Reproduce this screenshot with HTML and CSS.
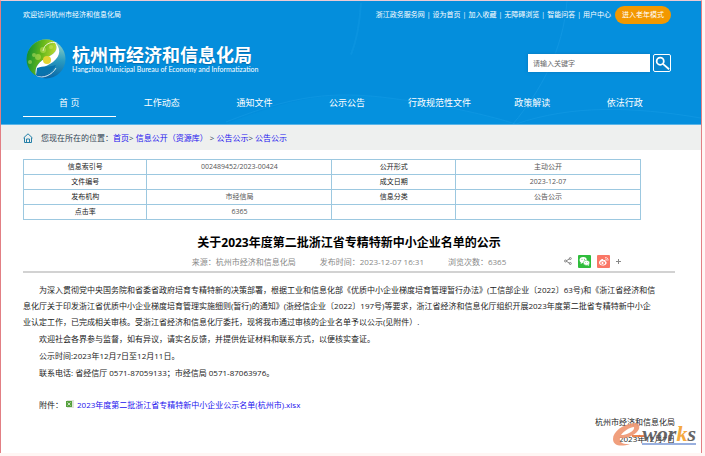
FILE: index.html
```html
<!DOCTYPE html>
<html lang="zh-CN">
<head>
<meta charset="utf-8">
<meta name="viewport" content="width=device-width, initial-scale=1">
<title>杭州市经济和信息化局</title>
<link rel="stylesheet" href="styles.css">
</head>
<body>
<div class="page">
  <header class="header">
    <svg class="waves" viewBox="0 0 700 124" preserveAspectRatio="none" aria-hidden="true">
      <path d="M225 124C290 98 330 90 390 98C450 106 490 116 515 124Z" fill="#0b97e3" opacity=".3"/>
      <path d="M566 0C562 50 540 90 512 124H700V0Z" fill="#0a96e2" opacity=".2"/>
      <path d="M566 0C562 50 540 90 512 124" fill="none" stroke="#2aa8ee" opacity=".3"/>
      <path d="M360 2Q358 34 350 54" fill="none" stroke="#1aa0e8" stroke-width="2" opacity=".3"/>
      <path d="M225 122C290 96 330 90 390 98S490 116 515 124C570 105 630 106 700 118" fill="none" stroke="#2aa8ee" opacity=".25"/>
    </svg>
    <div class="topbar">
      <span>欢迎访问杭州市经济和信息化局</span>
      <div class="tools">
        <a href="#">浙江政务服务网</a><i>|</i><a href="#">设为首页</a><i>|</i><a href="#">加入收藏</a><i>|</i><a href="#">无障碍浏览</a><i>|</i><a href="#">智能问答</a><i>|</i><a href="#">用户中心</a>
        <button class="elder" type="button">进入老年模式</button>
      </div>
    </div>
    <div class="brand">
      <a class="logo" href="#">
        <svg class="globe" viewBox="0 0 40 40" aria-hidden="true">
          <defs>
            <linearGradient id="green" x1="0" y1=".3" x2="1" y2=".5"><stop offset="0" stop-color="#078b36"/><stop offset=".5" stop-color="#65b71b"/><stop offset="1" stop-color="#c5dc37"/></linearGradient>
            <linearGradient id="blue" x1=".5" y1="0" x2=".4" y2="1"><stop offset="0" stop-color="#a3dbc5"/><stop offset=".5" stop-color="#2a9bc0"/><stop offset="1" stop-color="#0762a4"/></linearGradient>
            <clipPath id="ball"><circle cx="20" cy="20" r="19.5"/></clipPath>
          </defs>
          <g clip-path="url(#ball)">
            <rect width="40" height="40" fill="url(#blue)"/>
            <path d="M0 0H26C34 7 31 14 22 18C13 22 8 28 10 36L0 40Z" fill="url(#green)"/>
            <path d="M26 1C34 7 31 14 22 18C13 22 8 28 10 37C12 29 20 28 27 23C35 17 36 8 26 1Z" fill="#fff"/>
            <path d="M17 12C18 5 25 2 31 4M10 37C17 40 26 36 30 29" fill="none" stroke="#fff" stroke-width="1" opacity=".85"/>
            <path d="M11 29C18 26 22 29 30 26C26 34 17 37 10 36Z" fill="#0873ad"/>
            <circle cx="21" cy="21" r="4" fill="#e2d433"/>
            <g fill="#d4ec6a" opacity=".45"><circle cx="17" cy="11" r="3"/><circle cx="8" cy="16" r="2"/><circle cx="12" cy="18" r="3"/><circle cx="25" cy="8" r="2"/><circle cx="4" cy="23" r="2"/></g>
          </g>
        </svg>
        <span class="names"><strong>杭州市经济和信息化局</strong><small>Hangzhou Municipal Bureau of Economy and Informatization</small></span>
      </a>
      <form class="search">
        <input type="text" aria-label="请输入关键字" placeholder="请输入关键字">
        <button type="button" aria-label="搜索"><svg viewBox="0 0 18 18" aria-hidden="true"><circle cx="7" cy="7" r="4"/><path d="M10 10L17 16"/></svg></button>
      </form>
    </div>
    <nav class="nav">
      <a class="on" href="#">首 页</a><a href="#">工作动态</a><a href="#">通知文件</a><a href="#">公示公告</a><a href="#">行政规范性文件</a><a href="#">政策解读</a><a href="#">依法行政</a>
    </nav>
  </header>
  <div class="crumbs">
    <svg viewBox="0 0 10 10" aria-hidden="true"><path d="M.5 5L5 .8L9.500 5M1.500 4.500V9.500H8.500V4.500M3.500 9.500V6H6.500V9.500"/></svg>
    <span>您现在所在的位置：</span><a href="#">首页</a>&gt;&nbsp;<a href="#">信息公开（资源库）</a>&nbsp;&gt;&nbsp;<a href="#">公告公示</a>&gt;&nbsp;<a href="#">公告公示</a>
  </div>
  <main class="content">
    <table class="info">
      <tr><th>信息索引号</th><td>002489452/2023-00424</td><th>公开形式</th><td>主动公开</td></tr>
      <tr><th>文件编号</th><td></td><th>成文日期</th><td>2023-12-07</td></tr>
      <tr><th>发布机构</th><td>市经信局</td><th>信息分类</th><td>公告公示</td></tr>
      <tr><th>点击率</th><td>6365</td><th></th><td></td></tr>
    </table>
    <h1>关于2023年度第二批浙江省专精特新中小企业名单的公示</h1>
    <div class="meta">
      <div class="facts"><span>来源：杭州市经济和信息化局</span><span>发布时间：2023-12-07 16:31</span><span>浏览次数：6365</span></div>
      <div class="share">
        <svg class="nodes" viewBox="0 0 8 8" aria-hidden="true"><path d="M6 1.500L2 4L6 6.500"/><circle cx="1.500" cy="4" r="1"/><circle cx="6.300" cy="1.500" r="1"/><circle cx="6.300" cy="6.500" r="1"/></svg>
        <svg class="app" viewBox="0 0 13 13" role="img" aria-label="微信"><rect width="13" height="13" rx="1" fill="#2fbd3c"/><ellipse cx="5.200" cy="5" rx="3.600" ry="3" fill="#fff"/><path d="M3 7L2.600 9L5 7.800Z" fill="#fff"/><ellipse cx="8.500" cy="7.800" rx="3.200" ry="2.600" fill="#fff" stroke="#2fbd3c" stroke-width=".5"/><path d="M9.500 10L11 11L10.800 9Z" fill="#fff"/><g fill="#2fbd3c"><circle cx="4" cy="4.300" r=".5"/><circle cx="6.400" cy="4.300" r=".5"/><circle cx="7.500" cy="7.300" r=".4"/><circle cx="9.500" cy="7.300" r=".4"/></g></svg>
        <svg class="app" viewBox="0 0 13 13" role="img" aria-label="微博"><rect width="13" height="13" rx="1" fill="#fa7766"/><path d="M2 7.800C2 5.500 5 3.500 6 4.200C6.500 4.600 6.200 5.200 6.200 5.200C7.800 4.600 8.800 5 8.500 6.200C10.800 7 9.500 10.500 5.700 10.500C3.500 10.500 2 9.300 2 7.800Z" fill="#fff"/><ellipse cx="5.700" cy="8" rx="2.500" ry="1.700" fill="#fa7766"/><circle cx="5.500" cy="8.100" r="1.100" fill="#fff"/><path d="M8 2.700C10 2.200 11.500 3.800 10.900 5.700M8.300 4.200C9.200 4 9.800 4.600 9.500 5.400" fill="none" stroke="#fff" stroke-width=".8"/></svg>
        <svg class="plus" viewBox="0 0 5 5" aria-hidden="true"><path d="M2.500 0V5M0 2.500H5"/></svg>
      </div>
    </div>
    <article class="article">
      <p>为深入贯彻党中央国务院和省委省政府培育专精特新的决策部署，根据工业和信息化部《优质中小企业梯度培育管理暂行办法》(工信部企业〔2022〕63号)和《浙江省经济和信<br>息化厅关于印发浙江省优质中小企业梯度培育管理实施细则(暂行)的通知》(浙经信企业〔2022〕197号)等要求，浙江省经济和信息化厅组织开展2023年度第二批省专精特新中小企<br>业认定工作，已完成相关审核。受浙江省经济和信息化厅委托，现将我市通过审核的企业名单予以公示(见附件）.</p>
      <p>欢迎社会各界参与监督，如有异议，请实名反馈，并提供佐证材料和联系方式，以便核实查证。</p>
      <p>公示时间:2023年12月7日至12月11日。</p>
      <p>联系电话: 省经信厅 0571-87059133；市经信局 0571-87063976。</p>
      <p class="file">附件：<svg viewBox="0 0 8 8" aria-hidden="true"><path d="M1 0H8V8H1Z" fill="#e0e5dd"/><path d="M0 1H6V7H0Z" fill="#55a03c"/><path d="M1.500 2.500L4.500 5.500M4.500 2.500L1.500 5.500" stroke="#fff" stroke-width=".7"/></svg><a href="#">2023年度第二批浙江省专精特新中小企业公示名单(杭州市).xlsx</a></p>
      <div class="sign"><p>杭州市经济和信息化局</p><p>2023年12月7日</p>
        <div class="mark"><svg viewBox="0 0 34 24" aria-hidden="true"><path d="M23 0C10 1 1 9 1 16C1 23 9 24 18 21C11 21 7 20 8 15C15 16 24 12 27 6C28 2 26 0 23 0ZM22 4C23 8 15 12 9 12C12 8 18 4 22 4Z" fill="#ef9570"/><path d="M20 12H32V14H20Z" fill="#e8793f"/></svg><span>wor<b>k</b>s</span></div>
      </div>
    </article>
  </main>
</div>
</body>
</html>
```
FILE: styles.css
```css
* { box-sizing: border-box; }
body { margin: 0; background: #fff6f4; font: 8px/16px "Open Sans", "Noto Sans CJK SC", sans-serif; color: #222; }
a { color: inherit; text-decoration: none; }
p, h1 { margin: 0; }
.page { margin-right: 3px; border: 1px solid #e27f84; border-top-color: #eccbd5; border-bottom: 0; background: #fff; }

.header { position: relative; padding: 0 30px 0 22px; background: #048edc; color: #fff; border-bottom: 1px solid #5ab5e8; }
.waves { position: absolute; inset: 0; width: 100%; height: 100%; }
.topbar, .brand, .nav { position: relative; display: flex; }
.topbar { justify-content: space-between; align-items: center; height: 28px; font-size: 7px; }
.tools { display: flex; align-items: center; gap: 2px; }
.tools i { font-style: normal; }
.elder { width: 56px; height: 18px; margin-left: 2px; padding: 0; border: 0; border-radius: 9px; background: #f39800; color: #fff; font: inherit; }
.brand { justify-content: space-between; align-items: center; height: 60px; }
.logo { display: flex; align-items: center; gap: 6px; padding-left: 3px; }
.globe { width: 40px; height: 40px; }
.names { display: flex; flex-direction: column; }
.names strong { font-size: 18px; line-height: 20px; font-weight: 700; text-shadow: 0 1px 1px #056bae; }
.names small { font-family: Lato, sans-serif; font-size: 7px; line-height: 8px; }
.search { display: flex; gap: 3px; padding-top: 8px; }
.search input { width: 122px; height: 18px; padding: 0 5px; border: 0; border-radius: 0; background: #fff; font: inherit; font-size: 7px; box-shadow: 0 0 3px #0674b8; }
.search input::placeholder { color: #666; }
.search button { width: 18px; height: 18px; padding: 0; border: 1px solid #fff; border-radius: 2px; background: #0783cc; }
.search svg { display: block; width: 16px; height: 16px; fill: none; stroke: #fff; stroke-width: 2; }
.nav { height: 35px; font-size: 9px; }
.nav a { flex: 1; height: 28px; line-height: 28px; text-align: center; }
.nav .on { border-bottom: 1px solid #fff; }

.crumbs { display: flex; align-items: center; height: 25px; padding: 0 22px; background: #eef0ef; color: #345; }
.crumbs svg { width: 10px; height: 10px; margin-right: 8px; fill: none; stroke: #2680a8; }
.crumbs a, .file a { color: #1a10ee; }

.content { padding: 9px 26px 6px 22px; }
.info { width: calc(100% - 34px); border-collapse: collapse; table-layout: fixed; font-size: 7px; line-height: 14px; text-align: center; }
.info th, .info td { height: 15px; padding: 0; border: 1px solid #9cc8e0; }
.info th { width: 20%; font-weight: 400; color: #222; }
.info td { width: 30%; color: #555; }
h1 { margin-top: 12px; font-size: 12px; line-height: 22px; font-weight: 700; text-align: center; color: #000; }
.meta { display: grid; grid-template-columns: 1fr auto 1fr; height: 19px; border-bottom: 2px solid #d2d2d2; color: #888; }
.facts { grid-column: 2; display: flex; gap: 24px; }
.share { display: flex; align-items: center; gap: 6px; margin-left: 58px; height: 14px; }
.share svg { fill: none; stroke: #888; stroke-width: 1; }
.share .nodes { width: 8px; height: 8px; }
.share .app { width: 13px; height: 13px; stroke: none; }
.share .plus { width: 5px; height: 5px; }
.article { padding-top: 8px; }
.article p { margin-top: 1px; text-indent: 16px; white-space: nowrap; }
.article .file { margin-top: 16px; }
.file svg { width: 8px; height: 8px; margin: 0 3px; }
.sign { position: relative; text-align: right; }
.mark { position: absolute; right: -21px; bottom: 0; display: flex; align-items: center; opacity: .9; }
.mark svg { width: 34px; height: 24px; }
.mark span { margin-left: -4px; border-bottom: 2px solid #8fa8dc; font: italic bold 22px/18px "Liberation Serif", serif; color: #555; }
.mark b { color: #f5a02a; }
```
